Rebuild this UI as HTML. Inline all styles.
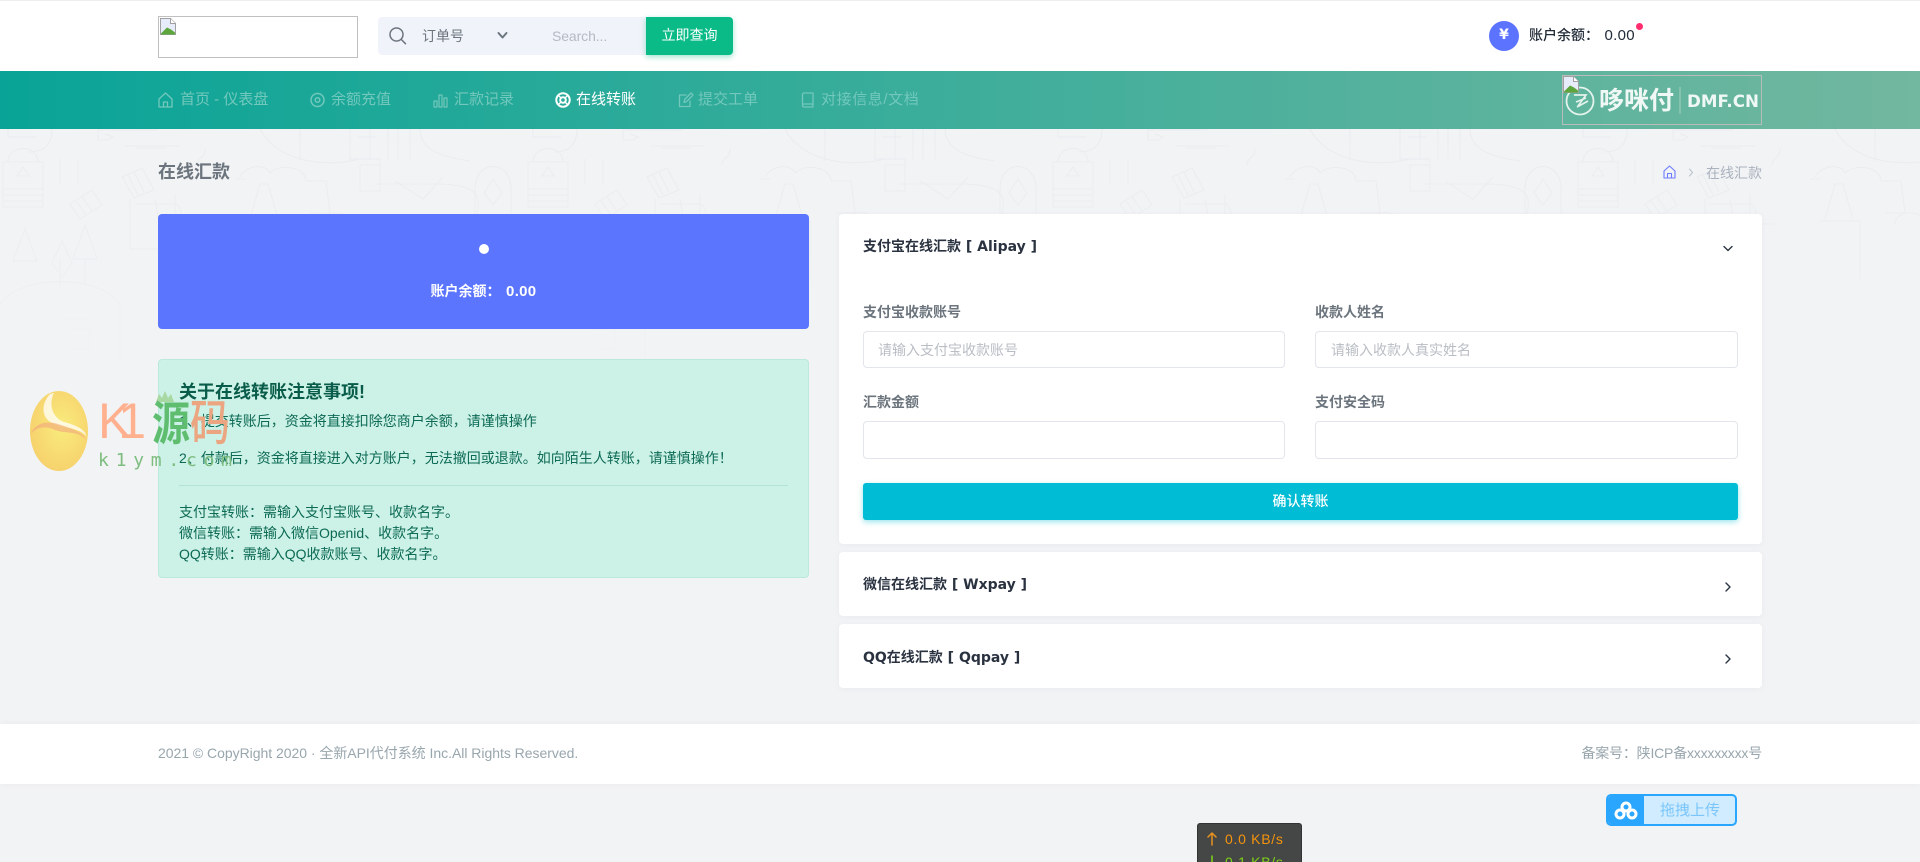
<!DOCTYPE html>
<html lang="zh"><head><meta charset="utf-8"><title>在线汇款</title>
<style>
*{box-sizing:border-box}
html,body{margin:0;padding:0;width:1920px;height:862px;overflow:hidden}
body{position:relative;background:#f2f3f5;font-family:"Liberation Sans","Noto Sans CJK SC",sans-serif;font-size:14px;color:#6c757d}
.a{position:absolute;white-space:nowrap}
.t{position:absolute;white-space:nowrap;line-height:20px;height:20px}
.nav{color:#72c8bc;font-size:15px}
.card{position:absolute;background:#fff;border-radius:4px;box-shadow:0 1px 6px rgba(60,70,90,.05)}
.lbl{color:#6c757d;font-weight:700}
.inp{position:absolute;background:#fff;border:1px solid #e2e5eb;border-radius:4px}
.ph{color:#b9bdc4}
.ttl{color:#2a3240;font-weight:700;font-family:"DejaVu Sans","Noto Sans CJK SC",sans-serif}
.al{color:#0c6a55}
.ic{position:absolute;fill:none;stroke-linecap:round;stroke-linejoin:round}
.num{margin-left:5.5px;font-size:15px;letter-spacing:.3px}
</style></head><body>

<!-- background pattern -->
<svg class="a" style="left:0;top:129px" width="1920" height="300" viewBox="0 0 1920 300">
<defs>
<linearGradient id="f" x1="0" y1="0" x2="0" y2="1"><stop offset="0" stop-color="#fff"/><stop offset=".4" stop-color="#fff" stop-opacity=".7"/><stop offset=".8" stop-color="#fff" stop-opacity="0"/></linearGradient>
<mask id="m"><rect width="1920" height="300" fill="url(#f)"/></mask>
<pattern id="p" x="0" y="0" width="525" height="300" patternUnits="userSpaceOnUse">
<g fill="none" stroke="#e9ebee" stroke-width="1">
<path d="M8 0v8h28M52 0c0 18-10 23-24 23M3 33h40a4 4 0 0 1 0 0v45H3zM8 33c0-18 30-18 30 0M23 38l-6 9h12zM3 60h40M3 66h40M3 72h40"/>
<path d="M60 30v26M78 30v26M105 5l8 3-5 3-10 0v-10h60M136 19h30M205 20c0 10-8 8-8 16M125 17h55"/>
<path d="M122 48l20-9 12 22-20 8zM128 46l10 20M134 43l10 20M70 75l22-14 10 15-22 14zM76 72l10 14M82 68l10 14"/>
<path d="M240 48c6-12 26-14 30-4 10-10 36-6 36 8h20l4 32h-20M245 50h-10"/>
<path d="M260 0c15 30 60 40 100 30M300 0v32M350 0v30h30v14M358 8h18M370 0v30M388 0v30M398 0v30M410 0v30M420 0c0 20 20 28 50 32"/>
<path d="M360 36h20v26h-20zM375 55h60c40 0 50 10 40 35M395 52l28 18 20-22"/>
<path d="M475 90V60c0-30 36-30 36 0v30zM493 50l-9 14 9 12 9-12z"/>
<path d="M25 100l-12 32h24zM62 112l-10 22 10 14 10-14zM85 96l-12 34h24zM60 130v30M85 130v26"/>
<path d="M0 175c20-30 100-30 120 0v60M60 190h30M70 200h20v20H70M130 70v50h40M135 75h40c8 0 10 30 0 35"/>
<path d="M155 70l5 30M175 65v30h25M250 90l10-35h8l10 35M245 92h40v60M320 95c0-15 30-15 30 0v40M380 100c0-10 30-10 30 0v30"/>
</g></pattern></defs>
<rect width="1920" height="300" fill="url(#p)" mask="url(#m)"/>
</svg>

<!-- header -->
<div class="a" style="left:0;top:1px;width:1920px;height:70px;background:#fff"></div>
<div class="a" style="left:0;top:0;width:1920px;height:1px;background:#eceef0"></div>
<div class="a" style="left:158px;top:16px;width:200px;height:42px;border:1px solid #c0c0c0">
<svg width="16" height="17" style="position:absolute;left:1px;top:1px"><path d="M.5.5h10l5 5v11H.5z" fill="#e6ecfa" stroke="#a0a0a0"/><path d="M1 15.500l6-6 4 2 4 3v2H1z" fill="#5da53d"/><path d="M10.500.5v5h5" fill="#fff" stroke="#a0a0a0"/></svg></div>
<div class="a" style="left:378px;top:17px;width:270px;height:38px;background:#f1f3fa;border-radius:4px 0 0 4px"></div>
<svg class="ic" style="left:388px;top:26px" width="20" height="20" viewBox="0 0 20 20" stroke="#6c757d" stroke-width="1.5"><circle cx="8.5" cy="8.5" r="6.5"/><path d="M13.2 13.4l4.3 4.3"/></svg>
<div class="t" style="left:422px;top:26px;color:#6c757d">订单号</div>
<svg class="ic" style="left:497px;top:31px" width="11" height="9" viewBox="0 0 11 9" stroke="#6c757d" stroke-width="2"><path d="M1.5 2l4 4.5 4-4.5"/></svg>
<div class="t" style="left:552px;top:26px;color:#b5b9c2;letter-spacing:-.1px">Search...</div>
<div class="a" style="left:646px;top:17px;width:87px;height:38px;background:#0abb87;border-radius:0 4px 4px 0;box-shadow:0 2px 6px rgba(10,187,135,.4);color:#fff;text-align:center;line-height:37px">立即查询</div>

<div class="a" style="left:1489px;top:21px;width:30px;height:30px;border-radius:50%;background:#5b73ff;color:#fff;text-align:center;line-height:29px;font-weight:700;font-size:14px;font-family:'DejaVu Sans',sans-serif">¥</div>
<div class="t" style="left:1529px;top:25px;color:#222b38;font-weight:500">账户余额：<span class="num">0.00</span></div>
<div class="a" style="left:1635.500px;top:23px;width:7px;height:7px;border-radius:50%;background:#ff2d6f"></div>

<!-- nav -->
<div class="a" style="left:0;top:71px;width:1920px;height:58px;background:linear-gradient(90deg,#09a497 0%,#72b79f 100%)"></div>
<svg class="ic" style="left:158px;top:92px" width="15" height="16" viewBox="0 0 15 16" stroke="#72c8bc" stroke-width="1.3"><path d="M1 7l6.500-6 6.500 6v8H1zM5.500 15v-5h4v5"/></svg>
<div class="t nav" style="left:180px;top:90px">首页 - 仪表盘</div>
<svg class="ic" style="left:310px;top:92px" width="15" height="16" viewBox="0 0 15 16" stroke="#72c8bc" stroke-width="1.5"><circle cx="7.500" cy="8" r="6.500"/><circle cx="7.500" cy="8" r="2.300"/></svg>
<div class="t nav" style="left:331px;top:90px">余额充值</div>
<svg class="ic" style="left:433px;top:92px" width="15" height="16" viewBox="0 0 15 16" stroke="#72c8bc" stroke-width="1.2"><path d="M1 9h3v6H1zM6 3h3v12H6zM11 6h3v9h-3z"/></svg>
<div class="t nav" style="left:454px;top:90px">汇款记录</div>
<svg class="ic" style="left:555px;top:92px" width="16" height="16" viewBox="0 0 16 16" stroke="#fff" stroke-width="2"><circle cx="8" cy="8" r="6.700"/><circle cx="8" cy="8" r="2.800"/><path d="M3.500 3.500l2.500 2.500M12.500 3.500L10 6M3.500 12.500L6 10M12.500 12.500L10 10" stroke-width="1.400"/></svg>
<div class="t nav" style="left:576px;top:90px;color:#fff">在线转账</div>
<svg class="ic" style="left:678px;top:92px" width="16" height="16" viewBox="0 0 16 16" stroke="#72c8bc" stroke-width="1.3"><path d="M12 9v5.500H1.500V3H8M6 10.500l.6-3L13 1l2 2-6.400 6.500z"/></svg>
<div class="t nav" style="left:698px;top:90px">提交工单</div>
<svg class="ic" style="left:801px;top:92px" width="14" height="16" viewBox="0 0 14 16" stroke="#72c8bc" stroke-width="1.300"><path d="M1.500 13V2.500a1.500 1.500 0 0 1 1.500-1.500h9v11H3a1.500 1.500 0 0 0 0 3h9v-3"/></svg>
<div class="t nav" style="left:821px;top:90px;letter-spacing:.6px">对接信息/文档</div>

<div class="a" style="left:1562px;top:75px;width:200px;height:50px;border:1px solid #b9bdb9"></div>
<svg class="a" style="left:1563px;top:76px" width="198" height="48" viewBox="0 0 198 48">
<g fill="none" stroke="#e4f3ec"><circle cx="17" cy="25" r="13.500" stroke-width="1.800"/><path d="M11 19h12l-8 11M13 26l10-4M14 31l11-6" stroke-width="1.700"/></g>
<path d="M.5.5h10l5 5v11H.5z" fill="#e6ecfa" stroke="#a0a0a0"/><path d="M1 15.500l6-6 4 2 4 3v2H1z" fill="#5da53d"/><path d="M10.500.5v5h5" fill="#fff" stroke="#a0a0a0"/>
<rect x="116.500" y="11" width="1" height="27" fill="#a4d0bf"/>
<text x="36" y="33" font-family="Noto Sans CJK SC,sans-serif" font-size="25" font-weight="700" fill="#eff8f4">哆咪付</text>
<text x="124" y="31" font-family="DejaVu Sans,sans-serif" font-size="16.500" font-weight="700" fill="#eff8f4" textLength="72" lengthAdjust="spacingAndGlyphs">DMF.CN</text>
</svg>

<!-- page title -->
<div class="t" style="left:158px;top:162px;font-size:18px;font-weight:700;color:#6c757d">在线汇款</div>
<svg class="ic" style="left:1663px;top:165px" width="13" height="14" viewBox="0 0 13 14" stroke="#6d7cff" stroke-width="1.100"><path d="M1 6l5.500-5 5.500 5v7H1zM4.500 13V8.500h4V13"/></svg>
<svg class="ic" style="left:1688px;top:168px" width="6" height="9" viewBox="0 0 6 9" stroke="#bcc4cf" stroke-width="1.100"><path d="M1.500 1l3 3.500-3 3.500"/></svg>
<div class="t" style="left:1706px;top:163px;color:#a9b2bd">在线汇款</div>

<!-- blue card -->
<div class="a" style="left:158px;top:214px;width:651px;height:115px;background:#5c75ff;border-radius:4px"></div>
<div class="a" style="left:479px;top:244px;width:10px;height:10px;border-radius:50%;background:#fff"></div>
<div class="a" style="left:158px;top:281px;width:651px;height:20px;line-height:20px;text-align:center;color:#fff;font-weight:700">账户余额：<span class="num">0.00</span></div>

<!-- alert -->
<div class="a" style="left:158px;top:359px;width:651px;height:219px;background:#ccf1e6;border:1px solid #bbe9dc;border-radius:4px"></div>
<div class="t" style="left:179px;top:381px;font-size:18px;line-height:22px;height:22px;font-weight:700;color:#085c49">关于在线转账注意事项!</div>
<div class="t al" style="left:179px;top:411px">1、提交转账后，资金将直接扣除您商户余额，请谨慎操作</div>
<div class="t al" style="left:179px;top:448px">2、付款后，资金将直接进入对方账户，无法撤回或退款。如向陌生人转账，请谨慎操作！</div>
<div class="a" style="left:179px;top:485px;width:609px;height:1px;background:#b3e3d5"></div>
<div class="t al" style="left:179px;top:502px">支付宝转账：需输入支付宝账号、收款名字。</div>
<div class="t al" style="left:179px;top:523px">微信转账：需输入微信Openid、收款名字。</div>
<div class="t al" style="left:179px;top:544px">QQ转账：需输入QQ收款账号、收款名字。</div>

<!-- right cards -->
<div class="card" style="left:839px;top:214px;width:923px;height:330px"></div>
<div class="t ttl" style="left:863px;top:237px">支付宝在线汇款 [ Alipay ]</div>
<svg class="ic" style="left:1722px;top:245px" width="12" height="8" viewBox="0 0 12 8" stroke="#2b3442" stroke-width="1.400"><path d="M2 1.500l4 4 4-4"/></svg>
<div class="t lbl" style="left:863px;top:302px">支付宝收款账号</div>
<div class="t lbl" style="left:1315px;top:302px">收款人姓名</div>
<div class="inp" style="left:863px;top:331px;width:422px;height:37px"></div>
<div class="inp" style="left:1315px;top:331px;width:423px;height:37px"></div>
<div class="t ph" style="left:878px;top:340px">请输入支付宝收款账号</div>
<div class="t ph" style="left:1331px;top:340px">请输入收款人真实姓名</div>
<div class="t lbl" style="left:863px;top:392px">汇款金额</div>
<div class="t lbl" style="left:1315px;top:392px">支付安全码</div>
<div class="inp" style="left:863px;top:421px;width:422px;height:38px"></div>
<div class="inp" style="left:1315px;top:421px;width:423px;height:38px"></div>
<div class="a" style="left:863px;top:483px;width:875px;height:37px;background:#00bcd4;border-radius:3px;box-shadow:0 2px 6px rgba(0,188,212,.4);color:#fff;text-align:center;line-height:36px;font-weight:500">确认转账</div>

<div class="card" style="left:839px;top:552px;width:923px;height:64px"></div>
<div class="t ttl" style="left:863px;top:575px">微信在线汇款 [ Wxpay ]</div>
<svg class="ic" style="left:1724px;top:581px" width="8" height="12" viewBox="0 0 8 12" stroke="#2b3442" stroke-width="1.400"><path d="M2 2l4 4-4 4"/></svg>
<div class="card" style="left:839px;top:624px;width:923px;height:64px"></div>
<div class="t ttl" style="left:863px;top:648px">QQ在线汇款 [ Qqpay ]</div>
<svg class="ic" style="left:1724px;top:653px" width="8" height="12" viewBox="0 0 8 12" stroke="#2b3442" stroke-width="1.400"><path d="M2 2l4 4-4 4"/></svg>

<!-- footer -->
<div class="a" style="left:0;top:724px;width:1920px;height:60px;background:#fff;box-shadow:0 0 6px rgba(60,70,90,.05)"></div>
<div class="t" style="left:158px;top:743px;color:#98a6ad;letter-spacing:-.03px">2021 © CopyRight 2020 · 全新API代付系统 Inc.All Rights Reserved.</div>
<div class="t" style="right:158px;top:743px;color:#98a6ad;letter-spacing:-.2px">备案号：陕ICP备xxxxxxxxx号</div>

<!-- widgets -->
<div class="a" style="left:1606px;top:794px;width:131px;height:32px;border:2px solid #2ba6ff;border-radius:5px;background:#d1ecff;overflow:hidden">
<div class="a" style="left:-2px;top:-2px;width:38px;height:32px;background:#2ba6ff"></div>
<svg class="a" style="left:6px;top:5px" width="24" height="19" viewBox="0 0 24 19" fill="none" stroke="#fff" stroke-width="3"><circle cx="12" cy="6" r="4"/><circle cx="6" cy="13" r="4"/><circle cx="18" cy="13" r="4"/></svg>
<div class="t" style="left:52px;top:5px;font-size:15px;color:#7ac6fa">拖拽上传</div>
</div>
<div class="a" style="left:1197px;top:823px;width:105px;height:39px;background:#454746;border:1px solid #333;border-bottom:0;border-radius:3px 3px 0 0"></div>
<div class="t" style="left:1225px;top:829px;color:#f5930c;letter-spacing:.7px">0.0 KB/s</div>
<div class="t" style="left:1225px;top:852px;height:10px;overflow:hidden;color:#7fd316;letter-spacing:.7px">0.1 KB/s</div>
<svg class="ic" style="left:1206px;top:830px" width="12" height="32" viewBox="0 0 12 32" stroke-width="1.500"><path d="M6 15V3M2 7l4-4 4 4" stroke="#e8921f"/><path d="M6 26v12M2 34l4 4 4-4" stroke="#7fd316"/></svg>

<!-- watermark -->
<svg class="a" style="left:28px;top:390px" width="210" height="84" viewBox="0 0 210 84">
<defs><radialGradient id="y" cx=".55" cy=".45" r=".65"><stop offset="0" stop-color="#f9ec7c"/><stop offset="1" stop-color="#f6ce6b"/></radialGradient></defs>
<ellipse cx="31" cy="41" rx="29" ry="40" fill="url(#y)"/>
<path d="M22 4C13 14 13 27 24 33c12 5 28 5 34 13 0-6-10-11-22-14C25 28 20 15 26 3z" fill="#fff" opacity=".75"/>
<path d="M3 44c6-8 16-8 24-4 8 4 24 0 31 10-2-8-16-12-28-16C18 30 6 34 3 44z" fill="#f0a080" opacity=".55"/>
<text x="70" y="48" font-family="Liberation Sans,sans-serif" font-size="50" fill="#ffb08f" textLength="48" lengthAdjust="spacing">K1</text>
<path d="M128 12l3-8 3 4 3-7 3 7 3-4 3 8z" fill="#a9d9a3"/>
<text transform="translate(124,50) scale(1,1.22)" font-family="Noto Sans CJK SC,sans-serif" font-size="38" font-weight="700" fill="#5fbd70">源</text>
<text transform="translate(162,50) scale(1,1.22)" font-family="Noto Sans CJK SC,sans-serif" font-size="40" font-weight="500" fill="#eba681">码</text>
<text x="70" y="76" font-family="DejaVu Sans Mono,monospace" font-size="18" fill="#7dbd7f" textLength="134" lengthAdjust="spacing">k1ym.com</text>
</svg>
</body></html>
